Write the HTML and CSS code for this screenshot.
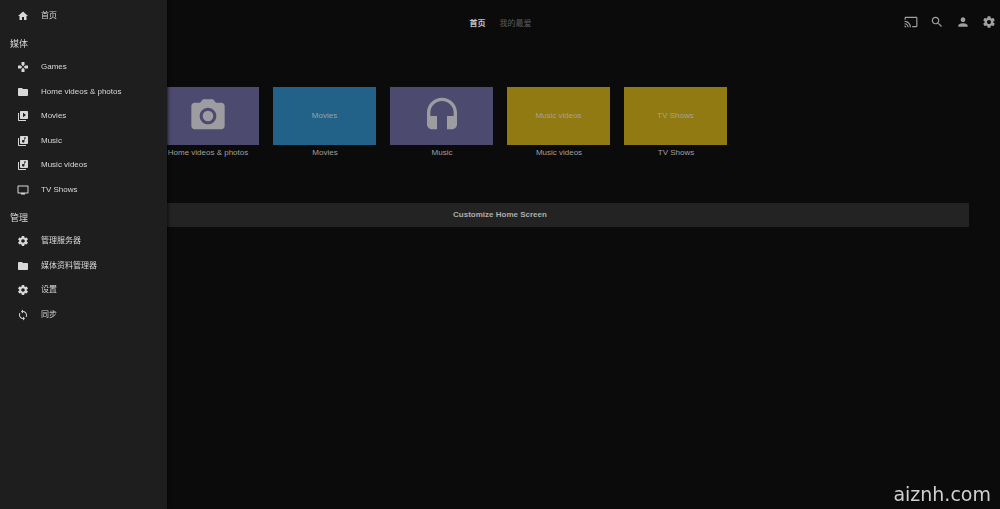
FILE: index.html
```
<!DOCTYPE html>
<html lang="zh-CN">
<head>
<meta charset="utf-8">
<title>首页</title>
<link rel="stylesheet" href="styles.css">
</head>
<body>
<svg class="sprite" aria-hidden="true">
  <symbol id="home" viewBox="0 0 24 24"><path d="M10 20v-6h4v6h5v-8h3L12 3 2 12h3v8z"/></symbol>
  <symbol id="games" viewBox="0 0 24 24"><path d="M15 7.500V2H9v5.500l3 3 3-3zM7.500 9H2v6h5.500l3-3-3-3zM9 16.500V22h6v-5.500l-3-3-3 3zM16.500 9l-3 3 3 3H22V9h-5.500z"/></symbol>
  <symbol id="folder" viewBox="0 0 24 24"><path d="M10 4H4c-1.100 0-1.990.9-1.990 2L2 18c0 1.100.9 2 2 2h16c1.100 0 2-.9 2-2V8c0-1.100-.9-2-2-2h-8l-2-2z"/></symbol>
  <symbol id="library-video" viewBox="0 0 24 24"><path d="M4 6H2v14c0 1.100.9 2 2 2h14v-2H4V6zm16-4H8c-1.100 0-2 .9-2 2v12c0 1.100.9 2 2 2h12c1.100 0 2-.9 2-2V4c0-1.100-.9-2-2-2zm-8 12.500v-9l6 4.500-6 4.500z"/></symbol>
  <symbol id="library-music" viewBox="0 0 24 24"><path d="M20 2H8c-1.100 0-2 .9-2 2v12c0 1.100.9 2 2 2h12c1.100 0 2-.9 2-2V4c0-1.100-.9-2-2-2zm-2 5h-3v5.500c0 1.380-1.120 2.500-2.500 2.500S10 13.880 10 12.500s1.120-2.500 2.500-2.500c.57 0 1.080.19 1.500.51V5h4v2zM4 6H2v14c0 1.100.9 2 2 2h14v-2H4V6z"/></symbol>
  <symbol id="tv" viewBox="0 0 24 24"><path d="M21 3H3c-1.100 0-2 .9-2 2v12c0 1.100.9 2 2 2h5v2h8v-2h5c1.100 0 1.990-.9 1.990-2L23 5c0-1.100-.9-2-2-2zm0 14H3V5h18v12z"/></symbol>
  <symbol id="gear" viewBox="0 0 24 24"><path d="M19.430 12.980c.04-.32.07-.64.07-.98s-.03-.66-.07-.98l2.110-1.650c.19-.15.24-.42.12-.64l-2-3.460c-.12-.22-.39-.3-.61-.22l-2.490 1c-.52-.4-1.080-.73-1.690-.98l-.38-2.650C14.460 2.180 14.250 2 14 2h-4c-.25 0-.46.18-.49.42l-.38 2.650c-.61.25-1.170.59-1.690.98l-2.490-1c-.23-.09-.49 0-.61.22l-2 3.460c-.13.22-.07.49.12.64l2.110 1.650c-.04.32-.07.65-.07.98s.03.66.07.98l-2.110 1.650c-.19.15-.24.42-.12.64l2 3.460c.12.22.39.3.61.22l2.490-1c.52.4 1.080.73 1.690.98l.38 2.650c.03.24.24.42.49.42h4c.25 0 .46-.18.49-.42l.38-2.650c.61-.25 1.170-.59 1.690-.98l2.490 1c.23.09.49 0 .61-.22l2-3.460c.12-.22.07-.49-.12-.64l-2.110-1.650zM12 15.500c-1.930 0-3.500-1.570-3.500-3.500s1.570-3.500 3.500-3.500 3.500 1.570 3.500 3.500-1.570 3.500-3.500 3.500z"/></symbol>
  <symbol id="sync" viewBox="0 0 24 24"><path d="M12 4V1L8 5l4 4V6c3.310 0 6 2.690 6 6 0 1.010-.25 1.970-.7 2.800l1.460 1.460C19.540 15.030 20 13.570 20 12c0-4.420-3.580-8-8-8zm0 14c-3.310 0-6-2.690-6-6 0-1.010.25-1.970.7-2.800L5.240 7.740C4.460 8.970 4 10.430 4 12c0 4.420 3.580 8 8 8v3l4-4-4-4v3z"/></symbol>
  <symbol id="cast" viewBox="0 0 24 24"><path d="M21 3H3c-1.100 0-2 .9-2 2v3h2V5h18v14h-7v2h7c1.100 0 2-.9 2-2V5c0-1.100-.9-2-2-2zM1 18v3h3c0-1.660-1.340-3-3-3zm0-4v2c2.760 0 5 2.240 5 5h2c0-3.870-3.130-7-7-7zm0-4v2c4.970 0 9 4.030 9 9h2c0-6.080-4.930-11-11-11z"/></symbol>
  <symbol id="search" viewBox="0 0 24 24"><path d="M15.500 14h-.79l-.28-.27C15.410 12.590 16 11.110 16 9.500 16 5.910 13.090 3 9.500 3S3 5.910 3 9.500 5.910 16 9.500 16c1.610 0 3.090-.59 4.230-1.570l.27.28v.79l5 4.990L20.490 19l-4.990-5zm-6 0C7.010 14 5 11.990 5 9.500S7.010 5 9.500 5 14 7.010 14 9.500 11.990 14 9.500 14z"/></symbol>
  <symbol id="person" viewBox="0 0 24 24"><path d="M12 12c2.210 0 4-1.790 4-4s-1.790-4-4-4-4 1.790-4 4 1.790 4 4 4zm0 2c-2.670 0-8 1.340-8 4v2h16v-2c0-2.660-5.330-4-8-4z"/></symbol>
  <symbol id="camera" viewBox="0 0 24 24"><circle cx="12" cy="12" r="3.200"/><path d="M9 2L7.170 4H4c-1.100 0-2 .9-2 2v12c0 1.100.9 2 2 2h16c1.100 0 2-.9 2-2V6c0-1.100-.9-2-2-2h-3.170L15 2H9zm3 15c-2.760 0-5-2.240-5-5s2.240-5 5-5 5 2.240 5 5-2.240 5-5 5z"/></symbol>
  <symbol id="headset" viewBox="0 0 24 24"><path d="M12 1c-4.970 0-9 4.030-9 9v7c0 1.660 1.340 3 3 3h3v-8H5v-2c0-3.870 3.130-7 7-7s7 3.130 7 7v2h-4v8h3c1.660 0 3-1.340 3-3v-7c0-4.970-4.030-9-9-9z"/></symbol>
</svg>

<header class="topbar">
  <nav class="tabs">
    <button class="tab tab-active" type="button">首页</button>
    <button class="tab" type="button">我的最爱</button>
  </nav>
  <div class="actions">
    <button class="action" type="button" aria-label="投放"><svg class="icon"><use href="#cast"/></svg></button>
    <button class="action" type="button" aria-label="搜索"><svg class="icon"><use href="#search"/></svg></button>
    <button class="action" type="button" aria-label="用户"><svg class="icon"><use href="#person"/></svg></button>
    <button class="action" type="button" aria-label="设置"><svg class="icon"><use href="#gear"/></svg></button>
  </div>
</header>

<main class="content">
  <div class="cards">
    <a class="card" href="#"><span class="tile tile-yellow"></span></a>
    <a class="card" href="#"><span class="tile tile-purple"><svg class="tile-icon"><use href="#camera"/></svg></span><span class="caption">Home videos &amp; photos</span></a>
    <a class="card" href="#"><span class="tile tile-blue">Movies</span><span class="caption">Movies</span></a>
    <a class="card" href="#"><span class="tile tile-purple"><svg class="tile-icon"><use href="#headset"/></svg></span><span class="caption">Music</span></a>
    <a class="card" href="#"><span class="tile tile-yellow">Music videos</span><span class="caption">Music videos</span></a>
    <a class="card" href="#"><span class="tile tile-yellow">TV Shows</span><span class="caption">TV Shows</span></a>
  </div>
  <button class="customize" type="button">Customize Home Screen</button>
</main>

<aside class="drawer">
  <nav class="menu">
    <a class="item item-home" href="#"><svg class="icon"><use href="#home"/></svg>首页</a>
    <h2 class="heading">媒体</h2>
    <div class="group group-media">
      <a class="item" href="#"><svg class="icon"><use href="#games"/></svg>Games</a>
      <a class="item" href="#"><svg class="icon"><use href="#folder"/></svg>Home videos &amp; photos</a>
      <a class="item" href="#"><svg class="icon"><use href="#library-video"/></svg>Movies</a>
      <a class="item" href="#"><svg class="icon"><use href="#library-music"/></svg>Music</a>
      <a class="item" href="#"><svg class="icon"><use href="#library-music"/></svg>Music videos</a>
      <a class="item" href="#"><svg class="icon"><use href="#tv"/></svg>TV Shows</a>
    </div>
    <h2 class="heading">管理</h2>
    <div class="group group-admin">
      <a class="item" href="#"><svg class="icon"><use href="#gear"/></svg>管理服务器</a>
      <a class="item" href="#"><svg class="icon"><use href="#folder"/></svg>媒体资料管理器</a>
      <a class="item" href="#"><svg class="icon"><use href="#gear"/></svg>设置</a>
      <a class="item" href="#"><svg class="icon"><use href="#sync"/></svg>同步</a>
    </div>
  </nav>
</aside>

<div class="watermark">aiznh.com</div>
</body>
</html>
```
FILE: styles.css
```
* {
  box-sizing: border-box;
}

body {
  margin: 0;
  min-height: 100vh;
  background: #0b0b0b;
  color: #a0a0a0;
  font-family: "Liberation Sans", "Noto Sans CJK SC", sans-serif;
  font-size: 8px;
  line-height: 12px;
}

a {
  color: inherit;
  text-decoration: none;
}

button {
  padding: 0;
  border: 0;
  background: none;
  color: inherit;
  font: inherit;
}

.sprite {
  display: none;
}

.icon {
  display: block;
  width: 12px;
  height: 12px;
  fill: currentColor;
}

.topbar {
  display: grid;
  grid-template-columns: 1fr auto 1fr;
  align-items: center;
  height: 46px;
}

.tabs {
  display: flex;
  grid-column: 2;
  gap: 14px;
  padding: 2px 0 0 1px;
}

.tab {
  color: #5c5c5c;
}

.tab-active {
  color: #c4c4c4;
  font-weight: bold;
}

.actions {
  display: flex;
  justify-content: flex-end;
  gap: 12px;
  padding: 0 4px 2px 0;
}

.actions .icon {
  width: 14px;
  height: 14px;
}

.content {
  padding: 41px 31px 0;
}

.cards {
  display: flex;
  gap: 14px;
  padding-left: 8px;
}

.card {
  width: 103px;
  height: 72px;
  text-align: center;
  white-space: nowrap;
}

.tile {
  display: flex;
  align-items: center;
  justify-content: center;
  height: 58px;
  color: #a5a391;
}

.tile-purple {
  background: #4d4a6f;
  color: #9d9da1;
}

.tile-blue {
  background: #236288;
  color: #90a4ae;
}

.tile-yellow {
  background: #927a12;
}

.tile-icon {
  width: 40px;
  height: 40px;
  fill: currentColor;
}

.caption {
  display: block;
  padding: 2px 0 0 1px;
}

.customize {
  width: 100%;
  height: 24px;
  margin-top: 44px;
  border-radius: 1px;
  background: #232323;
  color: #adadad;
  font-weight: bold;
}

.drawer {
  position: fixed;
  top: 0;
  bottom: 0;
  left: 0;
  width: 167px;
  background: #1e1e1e;
  box-shadow: 0 0 4px #000000;
  color: #d8d8d8;
}

.menu {
  padding-top: 4px;
}

.item {
  display: flex;
  align-items: center;
  gap: 12px;
  padding-left: 17px;
}

.item-home {
  height: 24px;
}

.heading {
  margin: 9px 0 4px;
  padding-left: 10px;
  font-size: 9px;
  font-weight: normal;
  line-height: 14px;
}

.group {
  display: grid;
  grid-auto-rows: 1fr;
}

.group-media {
  height: 147px;
}

.group-admin {
  height: 98px;
}

.watermark {
  position: fixed;
  right: 9px;
  bottom: 3px;
  color: #d0d0d0;
  font-family: "DejaVu Sans", sans-serif;
  font-size: 19px;
  line-height: 24px;
}
```
